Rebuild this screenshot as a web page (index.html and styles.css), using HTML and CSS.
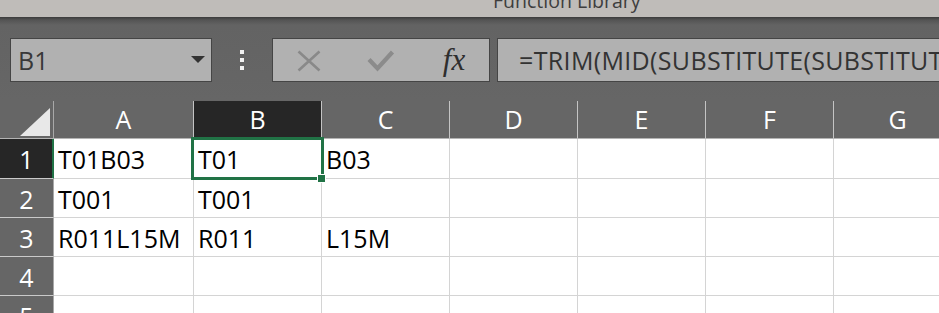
FILE: index.html
```html
<!DOCTYPE html>
<html lang="en">
<head>
  <meta charset="UTF-8" />
  <meta name="viewport" content="width=device-width, initial-scale=1.0"/>
  <title>Book1 - Excel</title>
  <link rel="stylesheet" href="styles.css">
</head>
<body>
  <div class="ribbon-edge">
    <span class="ribbon-label">Function Library</span>
  </div>

  <!-- Name box + formula bar -->
  <div class="formula-bar">
    <div class="name-box">
      <span class="name-text">B1</span>
      <span class="name-arrow"></span>
    </div>
    <div class="grip">
      <span></span><span></span><span></span>
    </div>
    <div class="fx-buttons">
      <span class="fx-btn">
        <svg width="24" height="22" viewBox="0 0 24 22">
          <path d="M1.5 1.5 L22.5 20.5 M22.5 1.5 L1.5 20.5" stroke="#898989" stroke-width="2.6" fill="none"/>
        </svg>
      </span>
      <span class="fx-btn">
        <svg width="28" height="22" viewBox="0 0 28 22">
          <path d="M2 9.5 L10.5 18.5 L25.5 2" stroke="#8b8b8b" stroke-width="4.2" fill="none"/>
        </svg>
      </span>
      <span class="fx-btn fx-label">fx</span>
    </div>
    <div class="formula-input">=TRIM(MID(SUBSTITUTE(SUBSTITUTE(</div>
  </div>

  <!-- Worksheet -->
  <div class="sheet">
    <div class="corner"><span class="corner-tri"></span></div>
    <div class="col-head">A</div>
    <div class="col-head active">B</div>
    <div class="col-head">C</div>
    <div class="col-head">D</div>
    <div class="col-head">E</div>
    <div class="col-head">F</div>
    <div class="col-head">G</div>

    <div class="row-head active">1</div>
    <div class="cell">T01B03</div>
    <div class="cell selected">T01<span class="sel-box"><span class="fill-handle"></span></span></div>
    <div class="cell">B03</div>
    <div class="cell"></div>
    <div class="cell"></div>
    <div class="cell"></div>
    <div class="cell"></div>

    <div class="row-head">2</div>
    <div class="cell">T001</div>
    <div class="cell">T001</div>
    <div class="cell"></div>
    <div class="cell"></div>
    <div class="cell"></div>
    <div class="cell"></div>
    <div class="cell"></div>

    <div class="row-head">3</div>
    <div class="cell">R011L15M</div>
    <div class="cell">R011</div>
    <div class="cell">L15M</div>
    <div class="cell"></div>
    <div class="cell"></div>
    <div class="cell"></div>
    <div class="cell"></div>

    <div class="row-head">4</div>
    <div class="cell"></div>
    <div class="cell"></div>
    <div class="cell"></div>
    <div class="cell"></div>
    <div class="cell"></div>
    <div class="cell"></div>
    <div class="cell"></div>

    <div class="row-head">5</div>
    <div class="cell"></div>
    <div class="cell"></div>
    <div class="cell"></div>
    <div class="cell"></div>
    <div class="cell"></div>
    <div class="cell"></div>
    <div class="cell"></div>
  </div>
</body>
</html>
```

FILE: styles.css
```css
* { box-sizing: border-box; }
body {
  margin: 0;
  width: 939px;
  height: 313px;
  overflow: hidden;
  background: #666;
  font-family: 'Open Sans', 'Liberation Sans', sans-serif;
}

/* ribbon bottom edge */
.ribbon-edge {
  height: 17px;
  overflow: hidden;
  background: #bfbcb9;
  padding-left: 493px;
}
.ribbon-label {
  display: block;
  margin-top: -9px;
  font-size: 19.5px;
  line-height: 20px;
  color: #3e3e3e;
  white-space: nowrap;
}

/* formula bar */
.formula-bar {
  height: 84px;
  padding-top: 21px;
  display: flex;
  align-items: flex-start;
  background: linear-gradient(to bottom, #3b3b3b 0, #545454 3px, #636363 8px, #666 100%);
}
.formula-bar > div { flex-shrink: 0; }
.name-box {
  margin-left: 10px;
  width: 202px;
  height: 44px;
  border: 1px solid #454545;
  background: #b1b1b1;
  display: flex;
  align-items: center;
  justify-content: space-between;
  padding: 0 6px 0 7px;
}
.name-text {
  font-size: 25px;
  line-height: 42px;
  color: #383838;
}
.name-arrow {
  width: 0;
  height: 0;
  border-left: 7px solid transparent;
  border-right: 7px solid transparent;
  border-top: 7px solid #333;
  margin-top: -2px;
}
.grip {
  width: 60px;
  height: 44px;
  display: flex;
  flex-direction: column;
  align-items: center;
  justify-content: center;
  gap: 4px;
}
.grip span {
  width: 4px;
  height: 4px;
  background: #f2f2f2;
}
.fx-buttons {
  width: 218px;
  height: 44px;
  border: 1px solid #454545;
  background: #b1b1b1;
  display: flex;
}
.fx-btn {
  width: 72px;
  display: flex;
  align-items: center;
  justify-content: center;
  padding-top: 2px;
}
.fx-label {
  font-family: 'Liberation Serif', serif;
  font-style: italic;
  font-size: 31px;
  color: #2e2e2e;
  padding-top: 0;
  padding-left: 2px;
}
.formula-input {
  width: 600px;
  margin-left: 7px;
  height: 44px;
  border: 1px solid #454545;
  background: #b1b1b1;
  padding-left: 21px;
  font-size: 25px;
  letter-spacing: 0.35px;
  line-height: 42px;
  color: #333;
  white-space: nowrap;
  overflow: hidden;
}

/* worksheet grid */
.sheet {
  display: grid;
  grid-template-columns: 54px 140px repeat(6, 128px);
  grid-template-rows: 38px 40px 39px 39px 39px 39px;
  width: max-content;
  background: #fff;
  font-size: 25px;
}
.corner {
  background: #666;
  border-right: 1px solid #a8a8a8;
  border-bottom: 1px solid #b4b4b4;
  display: flex;
  align-items: flex-end;
  justify-content: flex-end;
  padding: 0 3px 2px 0;
}
.corner-tri {
  width: 30px;
  height: 28px;
  background: #e8e8e8;
  clip-path: polygon(100% 0, 100% 100%, 0 100%);
}
.col-head {
  background: #666;
  color: #fff;
  text-align: center;
  line-height: 37px;
  border-right: 1px solid #c4c4c4;
  border-bottom: 1px solid #b4b4b4;
}
.col-head.active { background: #262626; }
.row-head {
  background: #666;
  color: #fff;
  text-align: center;
  line-height: 38px;
  padding-top: 1px;
  border-right: 1px solid #a8a8a8;
  border-bottom: 1px solid #cacaca;
}
.row-head.active {
  background: #262626;
  border-right-color: #217346;
  box-shadow: inset -1px 0 #217346;
}
.cell {
  color: #000;
  line-height: 38px;
  padding: 1px 0 0 4px;
  border-right: 1px solid #d4d4d4;
  border-bottom: 1px solid #d4d4d4;
  white-space: nowrap;
}
.cell.selected { position: relative; }
.sel-box {
  position: absolute;
  top: -2px;
  left: -3px;
  right: -3px;
  bottom: -2px;
  border: 3px solid #217346;
}
.fill-handle {
  position: absolute;
  right: -5px;
  bottom: -6px;
  width: 9px;
  height: 9px;
  background: #217346;
  border: 1px solid #fff;
}
```
